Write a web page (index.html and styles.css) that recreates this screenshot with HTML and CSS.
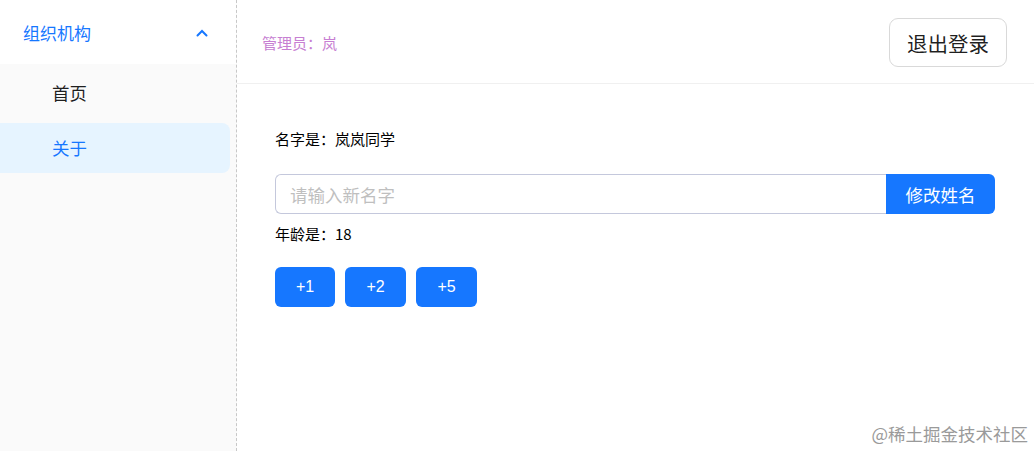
FILE: index.html
```html
<!DOCTYPE html>
<html lang="zh">
<head>
    <meta charset="UTF-8">
    <meta name="viewport" content="width=device-width, initial-scale=1.0">
    <title>关于</title>
    <link rel="stylesheet" href="styles.css">
</head>
<body>
    <aside class="sider">
        <div class="submenu-title">
            <span>组织机构</span>
            <svg class="arrow" width="12" height="8" viewBox="0 0 12 8">
                <path d="M1.5 6.5 L6 2 L10.5 6.5" fill="none" stroke="#1677ff" stroke-width="2" stroke-linecap="round"/>
            </svg>
        </div>
        <ul class="submenu">
            <li class="menu-item">首页</li>
            <li class="menu-item active">关于</li>
        </ul>
    </aside>

    <main class="main">
        <header class="header">
            <span class="admin">管理员：岚</span>
            <button class="logout">退出登录</button>
        </header>

        <section class="content">
            <p class="line">名字是：岚岚同学</p>
            <div class="input-group">
                <input type="text" class="name-input" placeholder="请输入新名字">
                <button class="btn-primary addon">修改姓名</button>
            </div>
            <p class="line age">年龄是：18</p>
            <div class="btn-row">
                <button class="btn-primary small">+1</button>
                <button class="btn-primary small">+2</button>
                <button class="btn-primary small">+5</button>
            </div>
        </section>

        <div class="watermark">@稀土掘金技术社区</div>
    </main>
</body>
</html>
```

FILE: styles.css
```css
body {
    margin: 0;
    font-family: "Noto Sans CJK SC", "Liberation Sans", sans-serif;
    color: #000;
    display: flex;
    height: 451px;
    overflow: hidden;
    background-color: #fff;
}
.sider {
    width: 237px;
    box-sizing: border-box;
    border-right: 1px dashed #c8c8c8;
    background-color: #fafafa;
    flex-shrink: 0;
}
.submenu-title {
    height: 64px;
    background-color: #fff;
    display: flex;
    align-items: center;
    justify-content: space-between;
    padding: 0 28px 0 23px;
    font-size: 17px;
    color: #1677ff;
}
.arrow {
    margin-top: 2px;
}
.submenu {
    list-style: none;
    margin: 0;
    padding: 4px 0 0 0;
}
.menu-item {
    height: 50px;
    line-height: 50px;
    margin: 0 6px 5px 0;
    padding-left: 52px;
    font-size: 17.5px;
    border-radius: 0 8px 8px 0;
    color: rgba(0, 0, 0, 0.88);
}
.menu-item.active {
    background-color: #e6f4ff;
    color: #1677ff;
}
.main {
    flex: 1;
    position: relative;
}
.header {
    height: 83px;
    border-bottom: 1px solid #f0f0f0;
    display: flex;
    align-items: center;
    justify-content: space-between;
    padding: 0 27px 0 25px;
}
.admin {
    font-size: 15px;
    color: #c77fd2;
    margin-top: 1px;
}
.logout {
    width: 118px;
    height: 49px;
    margin-top: 2px;
    padding: 0;
    background-color: #fff;
    border: 1px solid #d9d9d9;
    border-radius: 9px;
    font-family: inherit;
    font-size: 20.5px;
    color: rgba(0, 0, 0, 0.88);
    cursor: pointer;
}
.content {
    padding: 44px 38px 0 38px;
}
.line {
    margin: 0;
    font-size: 15px;
    line-height: 22px;
}
.input-group {
    display: flex;
    width: 720px;
    height: 40px;
    margin-top: 24px;
}
.name-input {
    flex: 1;
    box-sizing: border-box;
    height: 40px;
    border: 1px solid #c4c8dc;
    border-right: none;
    border-radius: 6px 0 0 6px;
    padding: 0 14px;
    font-family: inherit;
    font-size: 17.5px;
    outline: none;
}
.name-input::placeholder {
    color: #bfbfbf;
}
.btn-primary {
    background-color: #1677ff;
    color: #fff;
    border: none;
    font-family: inherit;
    font-size: 17.5px;
    cursor: pointer;
}
.addon {
    width: 109px;
    height: 40px;
    padding: 0;
    border-radius: 0 6px 6px 0;
}
.age {
    margin-top: 9px;
}
.btn-row {
    display: flex;
    gap: 10px;
    margin-top: 22px;
}
.small {
    width: 61px;
    height: 40px;
    border-radius: 6px;
    font-family: "Liberation Sans", sans-serif;
    font-size: 16px;
}
.small:first-child {
    width: 60px;
}
.watermark {
    position: absolute;
    right: 6px;
    bottom: 5px;
    font-size: 17.5px;
    color: #9a9a9a;
}
```
